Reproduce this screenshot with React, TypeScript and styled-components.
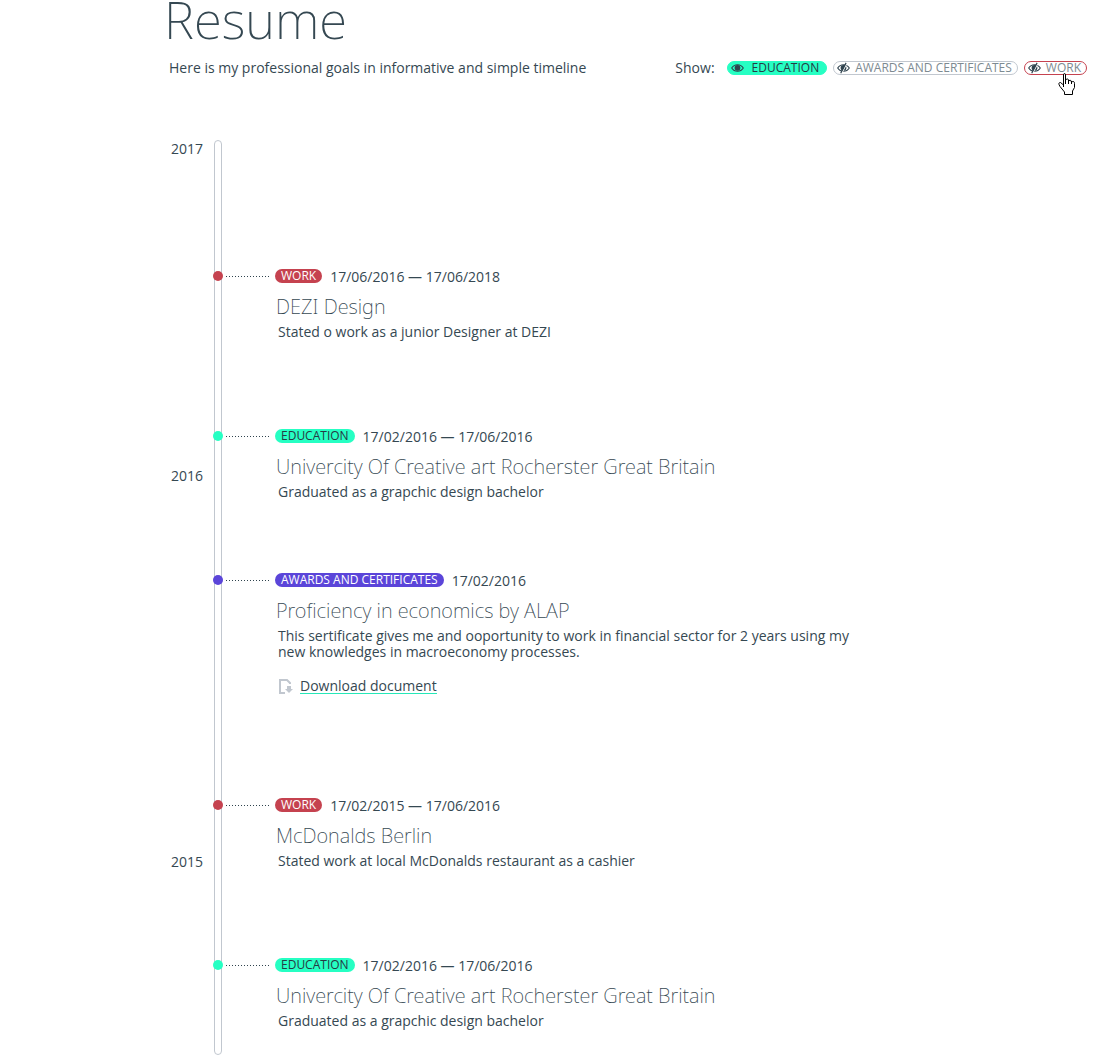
import React, { useState } from "react";
import styled, { createGlobalStyle } from "styled-components";

type Kind = "work" | "education" | "awards";

const KINDS: Record<Kind, { label: string; fill: string; ink: string }> = {
  education: { label: "EDUCATION", fill: "#26ffc3", ink: "#263a44" },
  awards: { label: "AWARDS AND CERTIFICATES", fill: "#5b45d9", ink: "#ffffff" },
  work: { label: "WORK", fill: "#c5424f", ink: "#ffffff" },
};

interface Entry {
  kind: Kind;
  dates: string;
  title: string;
  text: string;
  document?: string;
  space: number;
}

const ENTRIES: Entry[] = [
  { kind: "work", dates: "17/06/2016 — 17/06/2018", title: "DEZI Design", text: "Stated o work as a junior Designer at DEZI", space: 86 },
  { kind: "education", dates: "17/02/2016 — 17/06/2016", title: "Univercity Of Creative art Rocherster Great Britain", text: "Graduated as a grapchic design bachelor", space: 70 },
  {
    kind: "awards",
    dates: "17/02/2016",
    title: "Proficiency in economics by ALAP",
    text: "This sertificate gives me and ooportunity to work in financial sector for 2 years using my new knowledges in macroeconomy processes.",
    document: "Download document",
    space: 101,
  },
  { kind: "work", dates: "17/02/2015 — 17/06/2016", title: "McDonalds Berlin", text: "Stated work at local McDonalds restaurant as a cashier", space: 86 },
  { kind: "education", dates: "17/02/2016 — 17/06/2016", title: "Univercity Of Creative art Rocherster Great Britain", text: "Graduated as a grapchic design bachelor", space: 26 },
];

const YEARS = [
  { year: "2017", space: 311 },
  { year: "2016", space: 370 },
  { year: "2015", space: 0 },
];

const GlobalStyle = createGlobalStyle`
  *, *::before, *::after { box-sizing: border-box; }
  body {
    margin: 0;
    background: #ffffff;
    color: #354852;
    font: 14px/16px "Open Sans", "Noto Sans", sans-serif;
  }
  h1, h2, p, ol { margin: 0; padding: 0; }
  ol { list-style: none; }
`;

const Page = styled.main`
  padding: 0 24px 0 168px;
`;

const PageTitle = styled.h1`
  margin: -13px 0 0 -4px;
  padding-bottom: 1px;
  font: 200 51px/64px "Noto Sans", "Open Sans", sans-serif;
`;

const Intro = styled.div`
  display: flex;
  justify-content: space-between;
  align-items: center;
  height: 32px;
  padding-left: 1px;
`;

const Filters = styled.div`
  display: flex;
  align-items: center;
  gap: 6px;
`;

const FiltersLabel = styled.span`
  margin-right: 6px;
`;

const FilterButton = styled.button<{ $on: boolean; $fill: string; $hot: boolean }>`
  position: relative;
  display: flex;
  align-items: center;
  gap: ${(p) => (p.$on ? 8 : 5)}px;
  height: 14px;
  padding: 0 ${(p) => (p.$on ? 7 : 5)}px 0 3px;
  border: 1px solid ${(p) => (p.$on || p.$hot ? p.$fill : "#c1c7cf")};
  border-radius: 7px;
  background: ${(p) => (p.$on ? p.$fill : "transparent")};
  color: ${(p) => (p.$on ? "#263a44" : "#7d8a91")};
  font: 12px/12px "Open Sans", "Noto Sans", sans-serif;
  white-space: nowrap;
  cursor: pointer;
`;

const Pointer = styled.svg`
  position: absolute;
  left: 33px;
  top: 11px;
`;

const Timeline = styled.section`
  display: grid;
  grid-template-columns: 45px 10px 1fr;
  margin-top: 56px;
`;

const Years = styled.ol`
  grid-area: 1 / 1;
  padding: 1px 0 0 3px;
`;

const Year = styled.li<{ $space: number }>`
  margin-bottom: ${(p) => p.$space}px;
`;

const Rail = styled.div`
  grid-area: 1 / 2;
  margin: 0 1px;
  border: 1px solid #c1c7cf;
  border-radius: 4px;
`;

const Entries = styled.ol`
  grid-area: 1 / 2 / 2 / 4;
  padding-top: 126px;
`;

const EntryItem = styled.li<{ $space: number }>`
  padding-bottom: ${(p) => p.$space}px;
`;

const EntryHead = styled.div`
  display: flex;
  align-items: center;
  height: 20px;
`;

const Dot = styled.span<{ $fill: string }>`
  width: 10px;
  height: 10px;
  border-radius: 50%;
  background: ${(p) => p.$fill};
`;

const Leader = styled.span`
  width: 44px;
  height: 1px;
  margin: 0 5px 0 3px;
  background: repeating-linear-gradient(90deg, #2f434e 0 1px, transparent 1px 3px);
`;

const Tag = styled.span<{ $fill: string; $ink: string }>`
  height: 14px;
  margin-right: 8px;
  padding: 0 6px;
  border-radius: 7px;
  background: ${(p) => p.$fill};
  color: ${(p) => p.$ink};
  font-size: 12px;
  line-height: 14px;
`;

const Dates = styled.time`
  padding-top: 2px;
`;

const EntryBody = styled.div`
  max-width: 660px;
  padding-left: 65px;
`;

const EntryTitle = styled.h2`
  margin-left: -2px;
  padding: 6px 0 2px;
  font: 200 20px/30px "Noto Sans", "Open Sans", sans-serif;
`;

const DownloadLink = styled.a`
  display: flex;
  width: fit-content;
  align-items: center;
  gap: 7px;
  margin-top: 18px;
  color: inherit;
  text-decoration: none;
`;

const LinkText = styled.span`
  height: 16px;
  border-bottom: 1px solid #26e8b8;
`;

function Eye({ off }: { off: boolean }) {
  return (
    <svg width="13" height="12" viewBox="0 0 13 12" aria-hidden="true">
      <path d="M.7 6C3.4 1.6 9.6 1.6 12.3 6 9.6 10.4 3.4 10.4.7 6Z" fill="none" stroke="#2f434e" strokeWidth="1.1" />
      <circle cx="6.5" cy="5.8" r="2.9" fill="#2f434e" />
      {off && <path d="M9.9 1.2 4.7 11.2" stroke="#fff" strokeWidth="1.2" />}
      {off && <path d="M9.1.9 3.7 11.2" stroke="#2f434e" strokeWidth="1.2" />}
    </svg>
  );
}

function HandPointer() {
  return (
    <Pointer width="17" height="22" viewBox="0 0 17 22" aria-hidden="true">
      <path
        d="M5.5 14V2Q5.5.5 6.5.5T7.5 2V6.5L9.5 6Q10.5 6 10.5 7.5 13.5 6.5 13.5 9 16.5 7.5 16.5 10.5V14.5L14.5 18V21.5H6.5V19L2 13.5Q-.5 9.5 2.5 9.5L5.5 12Z"
        fill="#fff"
        stroke="#000"
      />
      <path d="M7.5 6V11M10.5 7V11M13.5 8V11" stroke="#000" />
    </Pointer>
  );
}

function FileDown() {
  return (
    <svg width="15" height="16" viewBox="0 0 15 16" aria-hidden="true">
      <path d="M7 15H2V2H9L12 5V6" fill="none" stroke="#c1c7cf" strokeWidth="2" />
      <path d="M9 8H13V11H15L11 15 7 11H9Z" fill="#c1c7cf" />
    </svg>
  );
}

export default function App() {
  const [shown, setShown] = useState<Record<Kind, boolean>>({ education: true, awards: false, work: false });
  const order: Kind[] = ["education", "awards", "work"];

  return (
    <>
      <GlobalStyle />
      <Page>
        <PageTitle>Resume</PageTitle>
        <Intro>
          <p>Here is my professional goals in informative and simple timeline</p>
          <Filters>
            <FiltersLabel>Show:</FiltersLabel>
            {order.map((kind) => (
              <FilterButton
                key={kind}
                type="button"
                aria-pressed={shown[kind]}
                $on={shown[kind]}
                $fill={KINDS[kind].fill}
                $hot={kind === "work"}
                onClick={() => setShown({ ...shown, [kind]: !shown[kind] })}
              >
                <Eye off={!shown[kind]} />
                {KINDS[kind].label}
                {kind === "work" && <HandPointer />}
              </FilterButton>
            ))}
          </Filters>
        </Intro>
        <Timeline>
          <Years>
            {YEARS.map((y) => (
              <Year key={y.year} $space={y.space}>{y.year}</Year>
            ))}
          </Years>
          <Rail />
          <Entries>
            {ENTRIES.map((e, i) => (
              <EntryItem key={i} $space={e.space}>
                <EntryHead>
                  <Dot $fill={KINDS[e.kind].fill} />
                  <Leader />
                  <Tag $fill={KINDS[e.kind].fill} $ink={KINDS[e.kind].ink}>{KINDS[e.kind].label}</Tag>
                  <Dates>{e.dates}</Dates>
                </EntryHead>
                <EntryBody>
                  <EntryTitle>{e.title}</EntryTitle>
                  <p>{e.text}</p>
                  {e.document && (
                    <DownloadLink href="#document">
                      <FileDown />
                      <LinkText>{e.document}</LinkText>
                    </DownloadLink>
                  )}
                </EntryBody>
              </EntryItem>
            ))}
          </Entries>
        </Timeline>
      </Page>
    </>
  );
}
